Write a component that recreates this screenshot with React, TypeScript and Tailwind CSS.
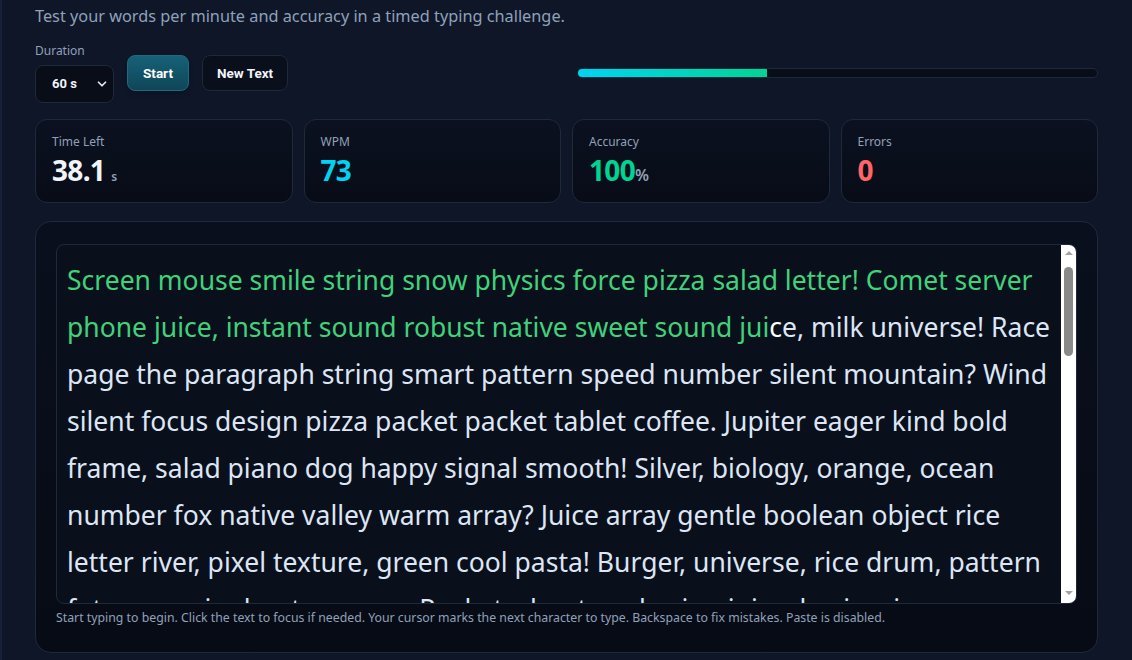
import React from "react";
import { ChevronDown } from "lucide-react";

interface Stat {
  label: string;
  value: string;
  unit?: string;
  unitClass?: string;
  valueClass: string;
}

const stats: Stat[] = [
  { label: "Time Left", value: "38.1", unit: "s", unitClass: "text-[12px] ml-[6px]", valueClass: "text-slate-100" },
  { label: "WPM", value: "73", valueClass: "text-cyan-400" },
  { label: "Accuracy", value: "100", unit: "%", unitClass: "text-[16px]", valueClass: "text-emerald-400" },
  { label: "Errors", value: "0", valueClass: "text-red-400" },
];

const typedLines = [
  "Screen mouse smile string snow physics force pizza salad letter! Comet server",
];

const restLines = [
  "page the paragraph string smart pattern speed number silent mountain? Wind",
  "silent focus design pizza packet packet tablet coffee. Jupiter eager kind bold",
  "frame, salad piano dog happy signal smooth! Silver, biology, orange, ocean",
  "number fox native valley warm array? Juice array gentle boolean object rice",
  "letter river, pixel texture, green cool pasta! Burger, universe, rice drum, pattern",
  "future music chapter scene. Rocket, chapter, physics, juice, basic, piano, camera",
];

const progress = 36.5;

const App = () => {
  return (
    <div className="min-h-screen bg-[#0e1628] text-slate-200 pl-[33px] pr-[34px] pt-[4px] pb-[8px] border-l-2 border-[#16203a]" style={{ fontFamily: "'Noto Sans', sans-serif" }}>
      <p className="text-[16.3px] leading-6 text-slate-400">
        Test your words per minute and accuracy in a timed typing challenge.
      </p>

      <div className="flex items-center justify-between mt-[15px]">
        <div className="flex items-center gap-[13px]">
          <div className="flex flex-col">
            <label className="text-[12px] leading-4 text-slate-400 mb-[6px]">Duration</label>
            <div className="flex items-center justify-between w-[79px] h-[38px] rounded-lg border border-[#1e293b] bg-[#090d18] pl-[16px] pr-[4px]" style={{ fontFamily: "Roboto, sans-serif" }}>
              <span className="text-[13px] font-bold text-slate-100">60 s</span>
              <ChevronDown size={14} strokeWidth={3} className="text-slate-200" />
            </div>
          </div>
          <button className="h-[36px] px-[15px] rounded-lg border border-[#1f6a7d] bg-gradient-to-b from-[#176178] to-[#0f4658] text-[13.5px] font-bold text-white shadow-md" style={{ fontFamily: "Roboto, sans-serif" }}>
            Start
          </button>
          <button className="h-[36px] px-[14px] rounded-lg border border-[#1e293b] bg-[#0a0f1c] text-[13.5px] font-bold text-slate-100" style={{ fontFamily: "Roboto, sans-serif" }}>
            New Text
          </button>
        </div>
        <div className="w-[521px] h-[10px] rounded-full border border-[#1e293b] bg-[#090d18] overflow-hidden">
          <div className="h-full bg-gradient-to-r from-cyan-400 to-emerald-400" style={{ width: `${progress}%` }} />
        </div>
      </div>

      <div className="grid grid-cols-4 gap-[11px] mt-[16px]">
        {stats.map((s) => (
          <div key={s.label} className="h-[84px] rounded-xl border border-[#1e293b] bg-gradient-to-b from-[#0b1120] to-[#080c17] px-4 pt-[14px]">
            <div className="text-[12px] leading-4 text-slate-400">{s.label}</div>
            <div className="flex items-baseline mt-[2px]">
              <span className={`text-[28px] leading-9 font-bold tracking-tight ${s.valueClass}`}>{s.value}</span>
              {s.unit && <span className={`text-slate-400 font-semibold ${s.unitClass}`}>{s.unit}</span>}
            </div>
          </div>
        ))}
      </div>

      <div className="mt-[18px] h-[432px] rounded-2xl border border-[#1e293b] bg-gradient-to-b from-[#0a0f1d] to-[#070b15] px-[20px] pt-[22px]">
        <div className="relative h-[360px] rounded-lg border border-[#1f2937] bg-[#0a0f1c] overflow-hidden">
          <div className="pl-[10px] pt-[12px] pr-[20px] text-[26.5px] leading-[47px] whitespace-nowrap">
            {typedLines.map((l) => (
              <div key={l} className="text-[#40d27a]">{l}</div>
            ))}
            <div>
              <span className="text-[#40d27a]">phone juice, instant sound robust native sweet sound jui</span>
              <span className="text-white">c</span>
              <span className="text-[#dce6f4]">e, milk universe! Race</span>
            </div>
            {restLines.map((l) => (
              <div key={l} className="text-[#dce6f4]">{l}</div>
            ))}
          </div>
          <div className="absolute right-0 top-0 bottom-0 w-[15px] bg-white flex flex-col items-center">
            <div className="mt-[6px] w-0 h-0 border-l-[4px] border-r-[4px] border-b-[4px] border-l-transparent border-r-transparent border-b-[#a3a3a3]" />
            <div className="mt-[12px] w-[9px] h-[89px] rounded-full bg-[#8a8a8a]" />
            <div className="mt-auto mb-[8px] w-0 h-0 border-l-[4px] border-r-[4px] border-t-[4px] border-l-transparent border-r-transparent border-t-[#a3a3a3]" />
          </div>
        </div>
        <p className="mt-[6px] text-[12.3px] leading-4 text-slate-400">
          Start typing to begin. Click the text to focus if needed. Your cursor marks the next character to type. Backspace to fix mistakes. Paste is disabled.
        </p>
      </div>
    </div>
  );
};

export default App;
